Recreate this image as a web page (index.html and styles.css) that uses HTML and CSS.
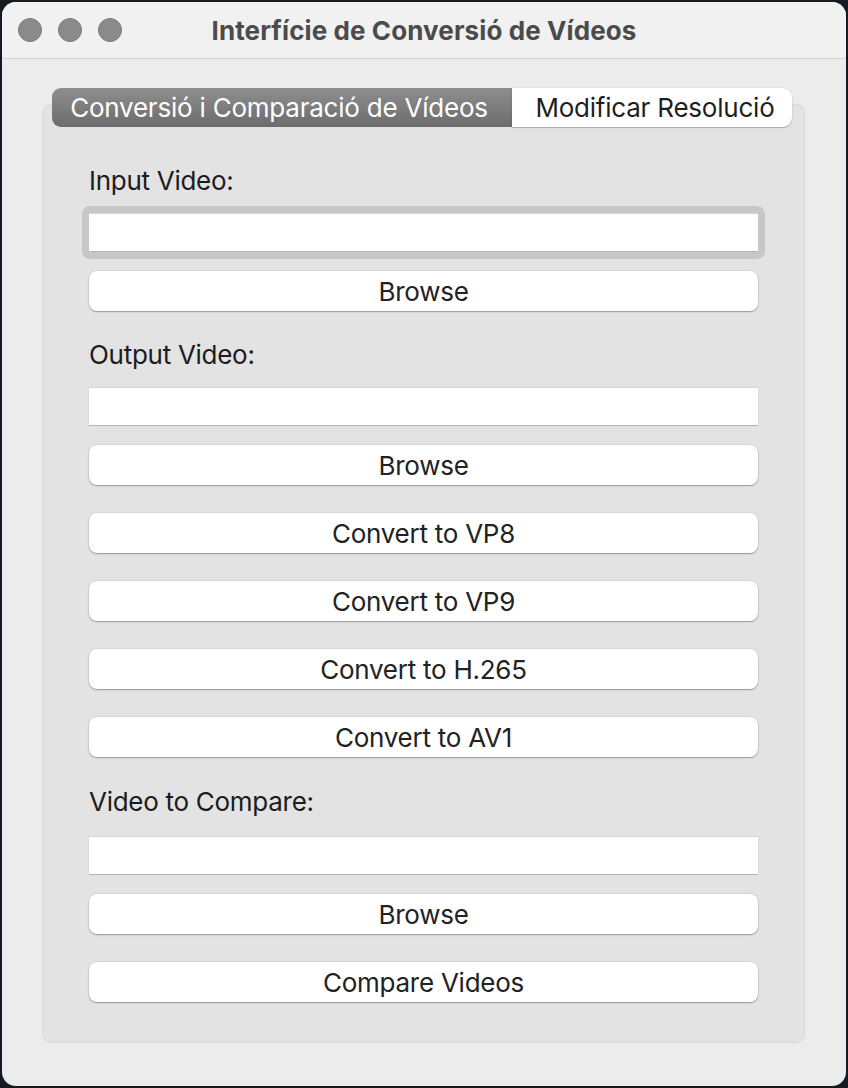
FILE: index.html
```html
<!DOCTYPE html>
<html lang="ca">
<head>
<meta charset="utf-8">
<title>Interfície de Conversió de Vídeos</title>
<link rel="stylesheet" href="styles.css">
</head>
<body>
<div class="window">
  <header class="titlebar">
    <div class="lights">
      <span class="light"></span>
      <span class="light"></span>
      <span class="light"></span>
    </div>
    <div class="title">Interfície de Conversió de Vídeos</div>
    <div class="spacer"></div>
  </header>
  <main class="content">
    <div class="tabs">
      <div class="tab tab-active">Conversió i Comparació de Vídeos</div>
      <div class="tab tab-idle">Modificar Resolució</div>
    </div>
    <section class="pane">
      <div class="label">Input Video:</div>
      <div class="field field-focus"></div>
      <div class="btn btn-after-field">Browse</div>

      <div class="label label-section">Output Video:</div>
      <div class="field"></div>
      <div class="btn btn-after-field">Browse</div>

      <div class="btn btn-gap">Convert to VP8</div>
      <div class="btn btn-gap">Convert to VP9</div>
      <div class="btn btn-gap">Convert to H.265</div>
      <div class="btn btn-gap">Convert to AV1</div>

      <div class="label label-section label-last">Video to Compare:</div>
      <div class="field"></div>
      <div class="btn btn-after-field">Browse</div>

      <div class="btn btn-gap">Compare Videos</div>
    </section>
  </main>
</div>
</body>
</html>
```

FILE: styles.css
```css
* { box-sizing: border-box; }

html, body {
  margin: 0;
  padding: 0;
}

body {
  width: 848px;
  height: 1088px;
  background: #161b21;
  font-family: Inter, "Noto Sans", "Liberation Sans", sans-serif;
  overflow: hidden;
}

.window {
  margin: 2px;
  width: 844px;
  height: 1084px;
  background: #ececec;
  border-radius: 14px;
  overflow: hidden;
  display: flex;
  flex-direction: column;
}

.titlebar {
  height: 57px;
  flex: none;
  background: #f1f1f1;
  border-bottom: 1px solid #d2d2d2;
  display: grid;
  grid-template-columns: 1fr auto 1fr;
  align-items: center;
}

.lights {
  display: flex;
  gap: 16px;
  padding-left: 16px;
}

.light {
  width: 24px;
  height: 24px;
  border-radius: 50%;
  background: #8b8b8b;
  border: 1px solid #7a7a7a;
}

.title {
  text-align: center;
  font-size: 26px;
  font-weight: 700;
  color: #4b4b4b;
  letter-spacing: 0.1px;
  white-space: nowrap;
}

.content {
  padding: 29px 41px 0 40px;
  display: flex;
  flex-direction: column;
}

.tabs {
  display: flex;
  margin-left: 10px;
  margin-bottom: -23px;
  position: relative;
  z-index: 1;
  height: 39px;
}

.tab {
  height: 39px;
  display: flex;
  align-items: center;
  justify-content: center;
  font-size: 26px;
  letter-spacing: -0.22px;
  white-space: nowrap;
}

.tab-active {
  width: 460px;
  padding-right: 6px;
  background: linear-gradient(#8e8e8e, #6c6c6c);
  color: #ffffff;
  border-radius: 9px 0 0 9px;
}

.tab-idle {
  width: 280px;
  padding-left: 6px;
  background: #ffffff;
  color: #1f1f1f;
  border-radius: 0 9px 9px 0;
  box-shadow: 0 1px 1px rgba(0, 0, 0, 0.22), 0 0 0 0.5px rgba(0, 0, 0, 0.08);
}

.pane {
  background: #e3e3e3;
  border: 1px solid #d8d8d8;
  border-radius: 9px;
  padding: 63px 46px 40px 46px;
  display: flex;
  flex-direction: column;
}

.label {
  font-size: 26px;
  line-height: 26px;
  letter-spacing: -0.28px;
  color: #1c1c1c;
  margin-bottom: 19px;
}

.label-section {
  margin-top: 31px;
}

.label-last {
  margin-top: 32px;
  margin-bottom: 21px;
}

.field {
  height: 39px;
  background: #ffffff;
  border-top: 1px solid #d6d6d6;
  border-bottom: 1px solid #b4b4b4;
  box-shadow: -0.5px 0 0 #d6d6d6, 0.5px 0 0 #d6d6d6;
}

.field-focus {
  outline: 7px solid #c7c7c9;
  border-radius: 1px;
  outline-offset: 0;
}

.btn {
  height: 40px;
  background: #ffffff;
  border-radius: 8px;
  box-shadow: 0 1px 1.5px rgba(0, 0, 0, 0.3), 0 0 0 0.5px rgba(0, 0, 0, 0.1);
  display: flex;
  align-items: center;
  justify-content: center;
  font-size: 26px;
  letter-spacing: -0.25px;
  color: #222222;
}

.btn-after-field {
  margin-top: 19px;
}

.btn-gap {
  margin-top: 28px;
}
```
